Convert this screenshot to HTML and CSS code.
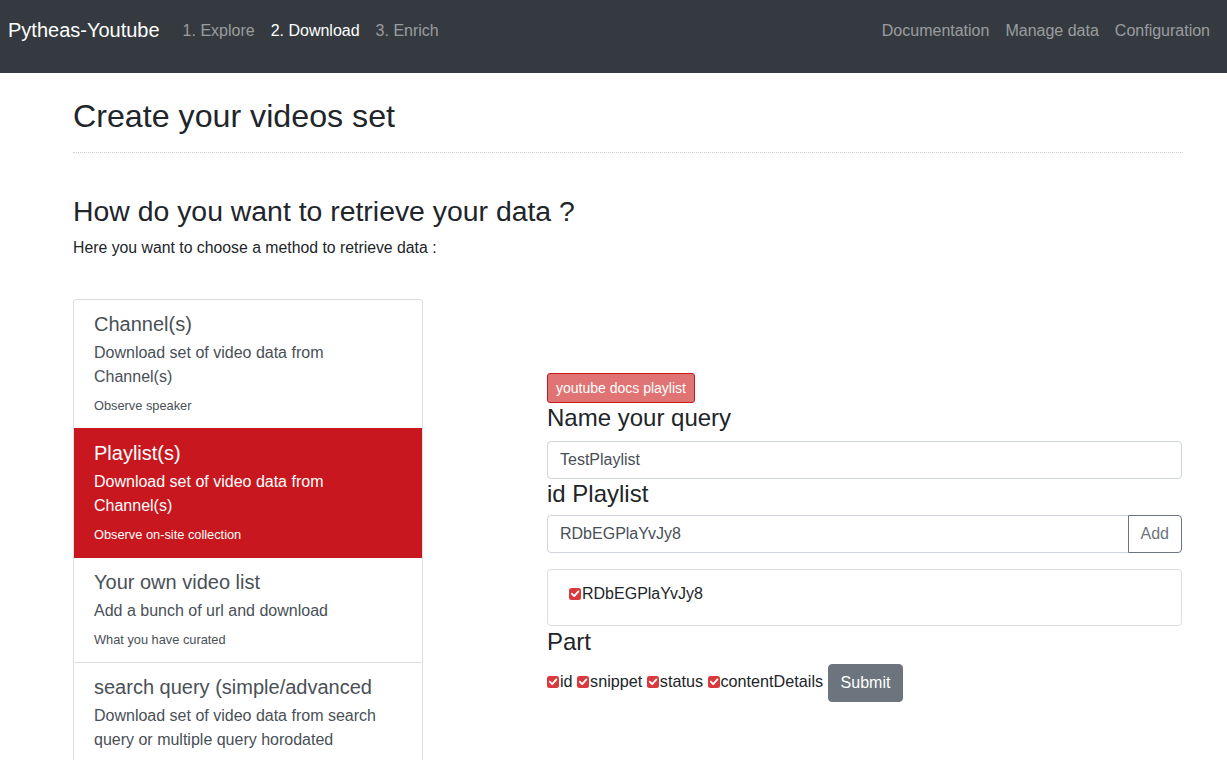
FILE: index.html
```html
<!DOCTYPE html>
<html>
<head>
<meta charset="utf-8">
<link rel="stylesheet" href="styles.css">
</head>
<body>
<nav class="navbar">
  <a class="brand">Pytheas-Youtube</a>
  <ul class="nav nav-left">
    <li><a class="nav-link">1. Explore</a></li>
    <li><a class="nav-link active">2. Download</a></li>
    <li><a class="nav-link">3. Enrich</a></li>
  </ul>
  <ul class="nav nav-right">
    <li><a class="nav-link">Documentation</a></li>
    <li><a class="nav-link">Manage data</a></li>
    <li><a class="nav-link">Configuration</a></li>
  </ul>
</nav>

<main class="container">
  <h1 class="page-title">Create your videos set</h1>
  <hr class="divider">
  <h3 class="section-title">How do you want to retrieve your data ?</h3>
  <p class="lead-text">Here you want to choose a method to retrieve data :</p>

  <div class="row">
    <div class="list-group">
      <a class="list-item">
        <h5 class="item-title">Channel(s)</h5>
        <p class="item-desc">Download set of video data from Channel(s)</p>
        <small class="item-note">Observe speaker</small>
      </a>
      <a class="list-item active">
        <h5 class="item-title">Playlist(s)</h5>
        <p class="item-desc">Download set of video data from Channel(s)</p>
        <small class="item-note">Observe on-site collection</small>
      </a>
      <a class="list-item">
        <h5 class="item-title">Your own video list</h5>
        <p class="item-desc">Add a bunch of url and download</p>
        <small class="item-note">What you have curated</small>
      </a>
      <a class="list-item">
        <h5 class="item-title">search query (simple/advanced</h5>
        <p class="item-desc">Download set of video data from search query or multiple query horodated</p>
      </a>
    </div>

    <div class="form-col">
      <button class="btn-docs">youtube docs playlist</button>
      <h4 class="form-label">Name your query</h4>
      <input class="form-input" type="text" value="TestPlaylist">
      <h4 class="form-label">id Playlist</h4>
      <div class="input-group">
        <input class="form-input grouped" type="text" value="RDbEGPlaYvJy8">
        <button class="btn-add">Add</button>
      </div>
      <div class="id-box">
        <span class="chk"><svg viewBox="0 0 12 12" width="12" height="12"><rect x="0" y="0" width="12" height="12" rx="2.5" fill="#d93a3e"/><path d="M2.8 5.6 L5.2 8.2 L9.4 3.4" fill="none" stroke="#fff" stroke-width="1.8" stroke-linecap="round" stroke-linejoin="round"/></svg></span>RDbEGPlaYvJy8
      </div>
      <h4 class="form-label part-label">Part</h4>
      <div class="parts">
        <span class="chk"><svg viewBox="0 0 12 12" width="12" height="12"><rect x="0" y="0" width="12" height="12" rx="2.5" fill="#d93a3e"/><path d="M2.8 5.6 L5.2 8.2 L9.4 3.4" fill="none" stroke="#fff" stroke-width="1.8" stroke-linecap="round" stroke-linejoin="round"/></svg></span>id
        <span class="chk"><svg viewBox="0 0 12 12" width="12" height="12"><rect x="0" y="0" width="12" height="12" rx="2.5" fill="#d93a3e"/><path d="M2.8 5.6 L5.2 8.2 L9.4 3.4" fill="none" stroke="#fff" stroke-width="1.8" stroke-linecap="round" stroke-linejoin="round"/></svg></span>snippet
        <span class="chk"><svg viewBox="0 0 12 12" width="12" height="12"><rect x="0" y="0" width="12" height="12" rx="2.5" fill="#d93a3e"/><path d="M2.8 5.6 L5.2 8.2 L9.4 3.4" fill="none" stroke="#fff" stroke-width="1.8" stroke-linecap="round" stroke-linejoin="round"/></svg></span>status
        <span class="chk"><svg viewBox="0 0 12 12" width="12" height="12"><rect x="0" y="0" width="12" height="12" rx="2.5" fill="#d93a3e"/><path d="M2.8 5.6 L5.2 8.2 L9.4 3.4" fill="none" stroke="#fff" stroke-width="1.8" stroke-linecap="round" stroke-linejoin="round"/></svg></span>contentDetails
        <button class="btn-submit">Submit</button>
      </div>
    </div>
  </div>
</main>
</body>
</html>
```

FILE: styles.css
```css
* { box-sizing: border-box; }
html, body { margin: 0; padding: 0; }
body {
  font-family: "Liberation Sans", Arial, sans-serif;
  font-size: 16px;
  line-height: 1.5;
  color: #212529;
  background: #fff;
  overflow: hidden;
}
.navbar {
  height: 73px;
  background: #343a40;
  display: flex;
  align-items: flex-start;
  padding: 16px 9px 0 8px;
}
.brand {
  font-size: 20px;
  line-height: 30px;
  color: #fff;
  margin-right: 15px;
  margin-top: -1px;
}
.nav {
  list-style: none;
  margin: 0;
  padding: 0;
  display: flex;
}
.nav-right { margin-left: auto; }
.nav-link {
  display: block;
  padding: 3px 8px;
  line-height: 24px;
  color: rgba(255,255,255,0.5);
}
.nav-link.active { color: #fff; }

.container {
  margin-left: 73px;
  width: 1110px;
}
.page-title {
  font-size: 32.2px;
  font-weight: 400;
  line-height: 38px;
  margin: 24px 0 0 0;
  color: #212529;
}
.divider {
  border: 0;
  border-top: 1px dotted #cfcfcf;
  margin: 17px 0 0 0;
  height: 0;
}
.section-title {
  font-size: 28.4px;
  font-weight: 400;
  line-height: 34px;
  margin: 41px 0 0 0;
}
.lead-text {
  margin: 8px 0 0 0;
  font-size: 15.8px;
  line-height: 24px;
}
.row {
  display: flex;
  gap: 124px;
  margin-top: 39px;
}
.list-group {
  width: 350px;
  flex: none;
  display: flex;
  flex-direction: column;
  border: 1px solid rgba(0,0,0,0.125);
  border-bottom: 0;
  border-radius: 4px 4px 0 0;
  overflow: hidden;
}
.list-item {
  display: flex;
  flex-direction: column;
  padding: 12px 20px 13px 20px;
  color: #495057;
  border-bottom: 1px solid rgba(0,0,0,0.125);
}
.list-item.active {
  background: #c8171e;
  color: #fff;
  border-bottom-color: #c8171e;
  margin-top: -1px;
  padding-top: 13px;
}
.item-title {
  font-size: 20px;
  font-weight: 400;
  line-height: 24px;
  margin: 0 0 5px 0;
}
.item-desc {
  margin: 0 0 7px 0;
  line-height: 24px;
}
.item-note {
  font-size: 12.8px;
  line-height: 19px;
}
.form-col {
  width: 635px;
  flex: none;
  padding-top: 74px;
}
.btn-docs {
  display: block;
  font-family: "Liberation Sans", Arial, sans-serif;
  font-size: 14px;
  line-height: 20px;
  padding: 4px 8px;
  height: 30px;
  color: #fff;
  background: #e07474;
  border: 1px solid #c8171e;
  border-radius: 3px;
}
.form-label {
  font-size: 24px;
  font-weight: 400;
  line-height: 29px;
  margin: 0;
  color: #212529;
}
.form-input {
  display: block;
  width: 100%;
  height: 38px;
  margin-top: 9px;
  padding: 6px 12px;
  font-family: "Liberation Sans", Arial, sans-serif;
  font-size: 16px;
  color: #495057;
  border: 1px solid #ced4da;
  border-radius: 4px;
  background: #fff;
}
.input-group {
  display: flex;
  margin-top: 7px;
}
.form-input.grouped {
  margin-top: 0;
  flex: 1;
  border-radius: 4px 0 0 4px;
}
.btn-add {
  height: 38px;
  padding: 6px 12px;
  font-family: "Liberation Sans", Arial, sans-serif;
  font-size: 16px;
  color: #6c757d;
  background: #fff;
  border: 1px solid #6c757d;
  border-radius: 0 4px 4px 0;
  margin-left: -1px;
}
.id-box {
  margin-top: 16px;
  height: 57px;
  border: 1px solid #dcdfe2;
  border-radius: 4px;
  padding: 12px 20px 0 21px;
  line-height: 24px;
  color: #212529;
}
.part-label { margin-top: 1px; }
.chk {
  display: inline-block;
  width: 13px;
  height: 12px;
  vertical-align: -0.5px;
}
.chk svg { display: block; }
.parts {
  margin-top: 8px;
  line-height: 24px;
  font-size: 16.2px;
  color: #212529;
}
.btn-submit {
  height: 38px;
  padding: 6px 12px;
  font-family: "Liberation Sans", Arial, sans-serif;
  font-size: 16px;
  line-height: 24px;
  color: #fff;
  background: #6c757d;
  border: 1px solid #6c757d;
  border-radius: 4px;
  vertical-align: middle;
}
```
